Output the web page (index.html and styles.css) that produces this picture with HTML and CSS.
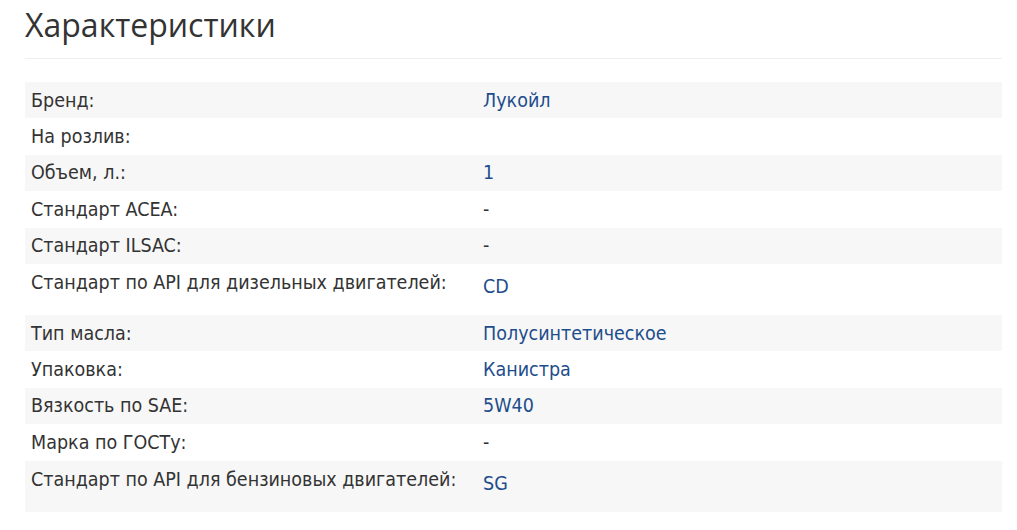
FILE: index.html
```html
<!DOCTYPE html>
<html lang="ru">
<head>
<meta charset="utf-8">
<link rel="stylesheet" href="styles.css">
</head>
<body>
<div class="page">
  <h2 class="title">Характеристики</h2>
  <table class="specs">
    <tr class="odd"><td class="label">Бренд:</td><td class="value">Лукойл</td></tr>
    <tr><td class="label">На розлив:</td><td class="value"></td></tr>
    <tr class="odd"><td class="label">Объем, л.:</td><td class="value">1</td></tr>
    <tr><td class="label">Стандарт ACEA:</td><td class="value plain">-</td></tr>
    <tr class="odd"><td class="label">Стандарт ILSAC:</td><td class="value plain">-</td></tr>
    <tr class="tall"><td class="label">Стандарт по API для дизельных двигателей:</td><td class="value">CD</td></tr>
    <tr class="odd"><td class="label">Тип масла:</td><td class="value">Полусинтетическое</td></tr>
    <tr><td class="label">Упаковка:</td><td class="value">Канистра</td></tr>
    <tr class="odd"><td class="label">Вязкость по SAE:</td><td class="value">5W40</td></tr>
    <tr><td class="label">Марка по ГОСТу:</td><td class="value plain">-</td></tr>
    <tr class="odd tall"><td class="label">Стандарт по API для бензиновых двигателей:</td><td class="value">SG</td></tr>
  </table>
</div>
</body>
</html>
```
FILE: styles.css
```css
html, body {
  margin: 0;
  padding: 0;
  background: #fff;
}
.page {
  padding: 0 15px 0 25px;
}
.title {
  margin: 0;
  padding: 6px 0 14px;
  font-family: "Open Sans", sans-serif;
  font-weight: 400;
  font-size: 32px;
  line-height: 38px;
  color: #333;
  border-bottom: 1px solid #eee;
}
.specs {
  width: 100%;
  margin-top: 23px;
  border-collapse: collapse;
  font-family: "DejaVu Sans Condensed", "DejaVu Sans", sans-serif;
  font-size: 19.5px;
  color: #333;
}
.specs tr {
  height: 36.4px;
}
.specs tr.odd {
  background: #f7f7f7;
}
.specs td {
  padding: 0 6px;
  vertical-align: middle;
  line-height: 23px;
}
.specs td.label {
  width: 440px;
}
.specs td.value {
  color: #1e4d8c;
}
.specs td.value.plain {
  color: #333;
}
.specs tr.tall {
  height: 51px;
}
.specs tr.tall td.label {
  padding-bottom: 13px;
}
.specs tr.tall td.value {
  padding-bottom: 6px;
}
```
